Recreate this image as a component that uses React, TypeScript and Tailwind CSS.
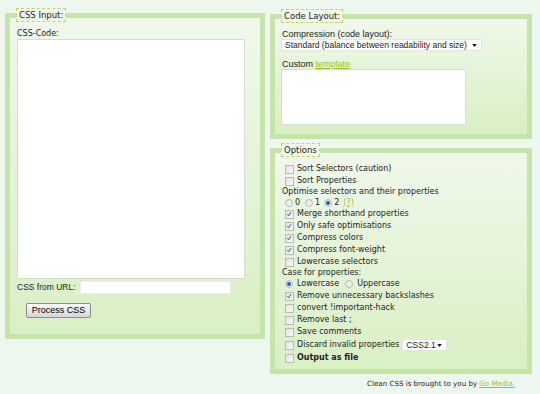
import type { ReactNode } from "react"

const verdana = "font-['DejaVu_Sans',Verdana,sans-serif]"
const arial = "font-['Liberation_Sans',Arial,sans-serif]"

function Legend({ children }: { children: ReactNode }) {
  return (
    <legend className="h-[14px] px-[2px] leading-[12px] text-[8.5px] border border-dashed border-[#c3d66b] bg-[#f3f9ea]">
      {children}
    </legend>
  )
}

function Box({ checked }: { checked?: boolean }) {
  return (
    <span className="relative flex-shrink-0 w-[9px] h-[9px] border border-[#b9b9b9] bg-gradient-to-br from-[#e2e2e2] to-[#f9f9f9]">
      {checked && (
        <svg viewBox="0 0 9 9" className="absolute inset-0 w-[7px] h-[7px]">
          <path d="M1.5 4.3 L3.3 6.2 L6.4 1.6" fill="none" stroke="#1d3f8f" strokeWidth="1.2" />
        </svg>
      )}
    </span>
  )
}

function Radio({ on }: { on?: boolean }) {
  return (
    <span className="flex-shrink-0 w-[8px] h-[8px] rounded-full border border-[#b9b9b9] bg-gradient-to-br from-[#e2e2e2] to-[#f9f9f9] flex items-center justify-center">
      {on && <span className="w-[4px] h-[4px] rounded-full bg-[#2b5aa8]" />}
    </span>
  )
}

function Check({ checked, bold, children }: { checked?: boolean; bold?: boolean; children: ReactNode }) {
  return (
    <div className="h-[12px] flex items-center pl-[3px] gap-[3px]">
      <Box checked={checked} />
      <span className={bold ? "font-bold" : ""}>{children}</span>
    </div>
  )
}

function FakeSelect({ value, cls }: { value: string; cls: string }) {
  return (
    <div className={`${arial} ${cls} bg-white border border-[#e4e4e4] flex items-center justify-between pl-[3px] pr-[4px] leading-[10px]`}>
      <span>{value}</span>
      <svg viewBox="0 0 6 4" className="w-[5px] h-[3px]"><path d="M0 0 H6 L3 4 Z" fill="#111" /></svg>
    </div>
  )
}

export default function App() {
  return (
    <div className={`${verdana} w-[540px] h-[394px] overflow-hidden bg-[#eef7ed] text-[#222] pt-[8px] px-[5px]`}>
      <div className="flex gap-[5px] items-start">
        {/* ── CSS Input ───────────────────────────── */}
        <fieldset className="w-[260px] h-[331px] border-[5px] border-[#c5e4aa] bg-gradient-to-b from-[#f0f8eb] to-[#d9efc4] pl-[6px] pt-[6px]">
          <Legend>CSS Input:</Legend>
          <div className="pl-[1px]">
            <div className="text-[8px] leading-[11px]">CSS-Code:</div>
            <textarea className="block w-[228px] h-[240px] bg-white border border-[#dadada] resize-none" />
            <div className="mt-[2px] h-[13px] flex items-center gap-[4px]">
              <span className={`${arial} text-[8.5px] text-[#1a1a1a]`}>CSS from URL:</span>
              <input className="w-[151px] h-[13px] bg-white border border-[#ececec]" />
            </div>
            <button className={`${arial} mt-[9px] ml-[9px] w-[65px] h-[15px] flex items-center justify-center text-[9px] border border-[#8c8c8c] rounded-[2px] bg-gradient-to-b from-[#fafafa] to-[#d6d6d6] text-black`}>
              Process CSS
            </button>
          </div>
        </fieldset>

        <div className="flex flex-col gap-[4px] mt-[1px]">
          {/* ── Code Layout ─────────────────────────── */}
          <fieldset className="w-[262px] h-[130px] border-[5px] border-[#c5e4aa] bg-gradient-to-b from-[#f0f8eb] to-[#d9efc4] pl-[6px] pt-[6px]">
            <Legend>Code Layout:</Legend>
            <div className={`${arial} text-[9px] leading-[10px] pl-[1px]`}>Compression (code layout):</div>
            <FakeSelect value="Standard (balance between readability and size)" cls="w-[201px] h-[12px] text-[8.5px]" />
            <div className={`${arial} mt-[8px] text-[9px] leading-[10px] pl-[1px]`}>
              Custom <span className="text-[#96c41e] underline">template</span>
            </div>
            <textarea className="block w-[185px] h-[56px] bg-white border border-[#dadada] resize-none" />
          </fieldset>

          {/* ── Options ─────────────────────────────── */}
          <fieldset className="w-[262px] h-[231px] border-[5px] border-[#c5e4aa] bg-gradient-to-b from-[#f0f8eb] to-[#d9efc4] pl-[6px] pt-[6px] text-[8px]">
            <Legend>Options</Legend>
            <div className="pl-[1px]">
              <Check>Sort Selectors (caution)</Check>
              <Check>Sort Properties</Check>
              <div className="h-[10px] leading-[10px]">Optimise selectors and their properties</div>
              <div className="h-[11px] flex items-center pl-[3px]">
                <Radio /><span className="ml-[2px] mr-[5px]">0</span>
                <Radio /><span className="ml-[2px] mr-[4px]">1</span>
                <Radio on /><span className="ml-[2px] mr-[4px]">2</span>
                <span className="text-[#96c41e] underline">(?)</span>
              </div>
              <Check checked>Merge shorthand properties</Check>
              <Check checked>Only safe optimisations</Check>
              <Check checked>Compress colors</Check>
              <Check checked>Compress font-weight</Check>
              <Check>Lowercase selectors</Check>
              <div className="h-[10px] leading-[10px]">Case for properties:</div>
              <div className="h-[12px] flex items-center pl-[3px]">
                <Radio on /><span className="ml-[4px] mr-[6px]">Lowercase</span>
                <Radio /><span className="ml-[4px]">Uppercase</span>
              </div>
              <Check checked>Remove unnecessary backslashes</Check>
              <Check>convert !important-hack</Check>
              <Check>Remove last ;</Check>
              <Check>Save comments</Check>
              <div className="h-[14px] flex items-center pl-[3px] gap-[3px]">
                <Box />
                <span>Discard invalid properties</span>
                <FakeSelect value="CSS2.1" cls="w-[45px] h-[12px] text-[8.5px]" />
              </div>
              <Check bold>Output as file</Check>
            </div>
          </fieldset>
        </div>
      </div>

      <div className="mt-[5px] pr-[20px] text-right text-[7.1px] leading-[9px]">
        Clean CSS is brought to you by <span className="text-[#96c41e] underline">Go Media.</span>
      </div>
    </div>
  )
}
